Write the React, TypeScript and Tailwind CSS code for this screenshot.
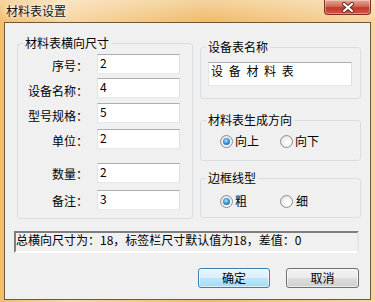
import React from "react";

function Radio({ checked }: { checked: boolean }) {
  return (
    <span className="flex h-[13px] w-[13px] shrink-0 items-center justify-center rounded-full border border-[#8f8f8f] bg-[radial-gradient(circle_at_60%_60%,#ffffff_20%,#d6d6d6)]">
      {checked && (
        <span className="h-[7px] w-[7px] rounded-full bg-[radial-gradient(circle_at_45%_40%,#a8e4ff,#2b88d0_55%,#0b4683)]" />
      )}
    </span>
  );
}

function Edit({ children, className }: { children: React.ReactNode; className: string }) {
  return (
    <div
      className={
        "border border-t-[#abadb3] border-l-[#e2e3ea] border-r-[#dbdfe6] border-b-[#e3e9ef] bg-white text-[12px] leading-[16px] text-black " +
        className
      }
    >
      {children}
    </div>
  );
}

const rows = [
  { label: "序号：", value: "2", mt: "mt-[3px]", pt: "pt-[4px]" },
  { label: "设备名称：", value: "4", mt: "mt-[4px]", pt: "pt-[5px]" },
  { label: "型号规格：", value: "5", mt: "mt-[4px]", pt: "pt-[5px]" },
  { label: "单位：", value: "2", mt: "mt-[5px]", pt: "pt-[4px]" },
  { label: "数量：", value: "2", mt: "mt-[14px]", pt: "pt-[3px]" },
  { label: "备注：", value: "3", mt: "mt-[7px]", pt: "pt-[3px]" },
];

export default function App() {
  return (
    <div className="h-[302px] w-[375px] overflow-hidden bg-[linear-gradient(to_right,#f2bd6e,#f7d6a2_18%,#efbb69_55%,#f4cb8c_85%,#f7d4a0)] font-['Noto_Sans_CJK_SC',sans-serif] text-[12px] text-black">
      {/* title bar */}
      <div className="flex h-[22px] items-start bg-[linear-gradient(to_bottom,rgba(255,255,255,0.35),rgba(255,255,255,0))]">
        <div className="pl-[6px] pt-[3px] text-[12px] leading-[16px] text-[#111] [text-shadow:0_0_6px_#fff,0_0_3px_#fff]">
          材料表设置
        </div>
        <div className="ml-auto mr-[4px] flex h-[15px] w-[47px] items-center justify-center rounded-b-[4px] border border-t-0 border-[#7c3327] bg-[linear-gradient(to_bottom,#e9a796,#d06a55_45%,#c1392a_55%,#d9553c)] shadow-[inset_0_0_0_1px_rgba(255,255,255,0.35)]">
          <svg width="14" height="11" viewBox="0 0 14 11">
            <path d="M3 2 L11 9 M11 2 L3 9" stroke="#5a2a24" strokeWidth="4" strokeLinecap="round" />
            <path d="M3 2 L11 9 M11 2 L3 9" stroke="#ffffff" strokeWidth="2.2" strokeLinecap="round" />
          </svg>
        </div>
      </div>

      {/* client area */}
      <div className="mx-[4px] h-[278px] border border-[#6b5a3d] bg-[#f0f0f0]">
        <div className="flex items-start">
          {/* left group */}
          <fieldset className="ml-[12px] mt-[12px] h-[184px] w-[176px] rounded-[3px] border border-[#d5dfe5]">
            <legend className="ml-[5px] px-[2px] text-[12px] leading-[16px]">材料表横向尺寸</legend>
            {rows.map((r) => (
              <div key={r.label} className={"flex items-start " + r.mt}>
                <div className={"w-[70px] text-right leading-[16px] " + r.pt}>{r.label}</div>
                <Edit className="ml-[9px] h-[20px] w-[83px] pl-[2px]">{r.value}</Edit>
              </div>
            ))}
          </fieldset>

          {/* right column */}
          <div className="ml-[7px] flex flex-col">
            <fieldset className="mt-[16px] h-[60px] w-[161px] rounded-[3px] border border-[#d5dfe5]">
              <legend className="ml-[5px] px-[2px] text-[12px] leading-[16px]">设备表名称</legend>
              <Edit className="ml-[7px] mt-[7px] h-[24px] w-[144px] pl-[2px] [word-spacing:3px]">设 备 材 料 表</Edit>
            </fieldset>

            <fieldset className="mt-[13px] h-[49px] w-[161px] rounded-[3px] border border-[#d5dfe5]">
              <legend className="ml-[5px] px-[2px] text-[12px] leading-[16px]">材料表生成方向</legend>
              <div className="ml-[19px] mt-[6px] flex h-[14px] items-center">
                <div className="flex w-[60px] items-center">
                  <Radio checked />
                  <span className="ml-[2px] leading-[14px]">向上</span>
                </div>
                <div className="flex items-center">
                  <Radio checked={false} />
                  <span className="ml-[2px] leading-[14px]">向下</span>
                </div>
              </div>
            </fieldset>

            <fieldset className="mt-[9px] h-[48px] w-[161px] rounded-[3px] border border-[#d5dfe5]">
              <legend className="ml-[5px] px-[2px] text-[12px] leading-[16px]">边框线型</legend>
              <div className="ml-[19px] mt-[8px] flex h-[14px] items-center">
                <div className="flex w-[60px] items-center">
                  <Radio checked />
                  <span className="ml-[2px] leading-[14px]">粗</span>
                </div>
                <div className="flex items-center">
                  <Radio checked={false} />
                  <span className="ml-[3px] leading-[14px]">细</span>
                </div>
              </div>
            </fieldset>
          </div>
        </div>

        {/* status */}
        <div className="ml-[9px] mt-[12px] h-[22px] w-[345px] border-2 border-t-[#7f7f7f] border-l-[#7f7f7f] border-b-[#ffffff] border-r-[#e6e6e6] leading-[14px]">
          总横向尺寸为：18，标签栏尺寸默认值为18，差值：0
        </div>

        {/* buttons */}
        <div className="mt-[15px] flex justify-end gap-[16px] pr-[11px]">
          <button className="flex h-[20px] w-[72px] items-center justify-center rounded-[3px] border border-[#3c7fb1] bg-[linear-gradient(to_bottom,#eaf6fd,#d9f0fc_50%,#bee6fd_50%,#a7d9f5)] text-[12px] leading-[14px] shadow-[inset_0_0_0_1px_rgba(255,255,255,0.6)]">
            确定
          </button>
          <button className="flex h-[20px] w-[73px] items-center justify-center rounded-[3px] border border-[#707070] bg-[linear-gradient(to_bottom,#f2f2f2,#ebebeb_50%,#dddddd_50%,#cfcfcf)] text-[12px] leading-[14px] shadow-[inset_0_0_0_1px_rgba(255,255,255,0.6)]">
            取消
          </button>
        </div>
      </div>
    </div>
  );
}
